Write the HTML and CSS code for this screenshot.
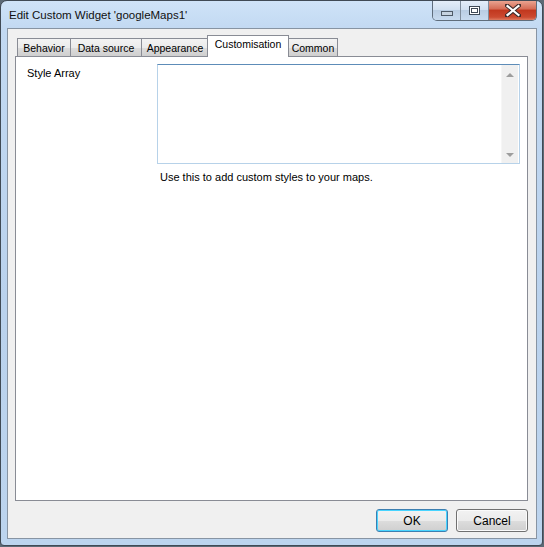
FILE: index.html
```html
<!DOCTYPE html>
<html>
<head>
<meta charset="utf-8">
<title>Edit Custom Widget</title>
<link rel="stylesheet" href="styles.css">
</head>
<body>
<div class="window">
  <div class="titlebar">
    <div class="title">Edit Custom Widget 'googleMaps1'</div>
    <div class="caption-buttons">
      <div class="cbtn cbtn-min"><span class="min-glyph"></span></div>
      <div class="cbtn cbtn-max"><span class="max-glyph"></span></div>
      <div class="cbtn cbtn-close">
        <svg width="16" height="13" viewBox="0 0 16 13">
          <path d="M2 1.5 L14 11.5 M14 1.5 L2 11.5" stroke="#3a2a2a" stroke-width="4.2" stroke-linecap="square"/>
          <path d="M2.5 2 L13.5 11 M13.5 2 L2.5 11" stroke="#ffffff" stroke-width="2.2" stroke-linecap="square"/>
        </svg>
      </div>
    </div>
  </div>
  <div class="client">
    <div class="tabs">
      <div class="tab tab-behavior">Behavior</div>
      <div class="tab tab-data">Data source</div>
      <div class="tab tab-appearance">Appearance</div>
      <div class="tab tab-selected">Customisation</div>
      <div class="tab tab-common">Common</div>
    </div>
    <div class="panel">
      <div class="field">
        <div class="label">Style Array</div>
        <div class="control">
          <div class="textbox">
            <div class="textbox-text"></div>
            <div class="vscroll">
              <span class="arrow arrow-up"></span>
              <span class="arrow arrow-down"></span>
            </div>
          </div>
          <div class="help">Use this to add custom styles to your maps.</div>
        </div>
      </div>
    </div>
    <div class="buttons">
      <div class="btn btn-default">OK</div>
      <div class="btn">Cancel</div>
    </div>
  </div>
</div>
</body>
</html>
```

FILE: styles.css
```css
html, body {
  margin: 0;
  padding: 0;
}
body {
  width: 544px;
  height: 547px;
  background: #5d6a76;
  font-family: "Liberation Sans", Arial, sans-serif;
  font-size: 11px;
  color: #000;
  overflow: hidden;
}
.window {
  box-sizing: border-box;
  width: 543px;
  height: 546px;
  border: 1px solid #404a55;
  border-radius: 7px 7px 4px 4px;
  background: linear-gradient(to bottom, #cfe3f8 0px, #c2d9f2 28px, #bad2ed 300px, #bcd4ee 100%);
  display: flex;
  flex-direction: column;
}
.titlebar {
  height: 27px;
  display: flex;
  align-items: flex-start;
}
.title {
  font-size: 11.5px;
  padding: 8px 0 0 8px;
  color: #111111;
}
.caption-buttons {
  margin-left: auto;
  margin-right: 5px;
  display: flex;
  height: 19px;
  border: 1px solid #5f6d7c;
  border-top: none;
  border-radius: 0 0 5px 5px;
  overflow: hidden;
}
.cbtn {
  height: 19px;
  display: flex;
  align-items: center;
  justify-content: center;
}
.cbtn-min, .cbtn-max {
  width: 27px;
  background: linear-gradient(to bottom, #e4eef9 0%, #d2e1f1 45%, #b9cde3 50%, #c8dbef 100%);
  border-right: 1px solid #7f8d9c;
}
.cbtn-close {
  width: 47px;
  background: linear-gradient(to bottom, #eaa390 0%, #d66e58 40%, #c2381f 50%, #cc4a30 85%, #de7a5f 100%);
}
.min-glyph {
  width: 10px;
  height: 3px;
  margin-top: 5px;
  background: #c6d3e0;
  border: 1px solid #4e5a67;
}
.max-glyph {
  box-sizing: border-box;
  width: 11px;
  height: 9px;
  border: 1px solid #3e4a57;
  background: #ffffff;
  box-shadow: inset 0 0 0 1px #ffffff, inset 0 0 0 2px #3e4a57;
}
.client {
  flex: 1;
  margin: 0 5px 6px 6px;
  border: 1px solid #8794a3;
  background: #f0f0f0;
  display: flex;
  flex-direction: column;
  padding: 6px 8px 6px 7px;
}
.tabs {
  display: flex;
  align-items: flex-end;
  height: 21px;
  padding-left: 2px;
  position: relative;
  z-index: 2;
}
.tab {
  box-sizing: border-box;
  height: 18px;
  padding-top: 3px;
  font-size: 10.5px;
  text-align: center;
  border: 1px solid #898c95;
  border-bottom: none;
  margin-right: -1px;
  background: linear-gradient(to bottom, #f3f3f3 0%, #ebebeb 50%, #dddddd 51%, #cfcfcf 100%);
  white-space: nowrap;
  color: #000;
}
.tab-behavior { width: 54px; }
.tab-data { width: 72px; }
.tab-appearance { width: 68px; }
.tab-common { width: 50px; }
.tab-selected {
  width: 82px;
  height: 22px;
  margin: 0 -1px -1px -1px;
  padding-top: 2px;
  background: #ffffff;
  position: relative;
  z-index: 3;
}
.panel {
  flex: 1;
  background: #ffffff;
  border: 1px solid #898c95;
  padding: 7px 7px 0 11px;
  position: relative;
  z-index: 1;
}
.field {
  display: grid;
  grid-template-columns: 130px 1fr;
}
.label {
  padding-top: 3px;
}
.textbox {
  box-sizing: border-box;
  height: 100px;
  border: 1px solid #b7d2e9;
  border-top-color: #5d8cb8;
  background: #ffffff;
  display: flex;
}
.textbox-text {
  flex: 1;
}
.vscroll {
  width: 16px;
  margin-right: 1px;
  background: #f0f0f0;
  border-left: 1px solid #f6f6f6;
  position: relative;
}
.arrow {
  position: absolute;
  left: 4px;
  width: 0;
  height: 0;
  border-left: 4px solid transparent;
  border-right: 4px solid transparent;
}
.arrow-up {
  top: 8px;
  border-bottom: 4px solid #9d9d9d;
}
.arrow-down {
  bottom: 6px;
  border-top: 4px solid #9d9d9d;
}
.help {
  padding: 7px 0 0 3px;
}
.buttons {
  display: flex;
  justify-content: flex-end;
  gap: 8px;
  padding-top: 8px;
}
.btn {
  box-sizing: border-box;
  width: 72px;
  height: 23px;
  border: 1px solid #707070;
  border-radius: 3px;
  background: linear-gradient(to bottom, #f2f2f2 0%, #ebebeb 50%, #dddddd 51%, #cfcfcf 100%);
  box-shadow: inset 0 0 0 1px #fbfbfb;
  display: flex;
  align-items: center;
  justify-content: center;
  font-size: 12px;
}
.btn-default {
  border-color: #3c7fb1;
  box-shadow: inset 0 0 0 1px #48d4ff;
}
```
